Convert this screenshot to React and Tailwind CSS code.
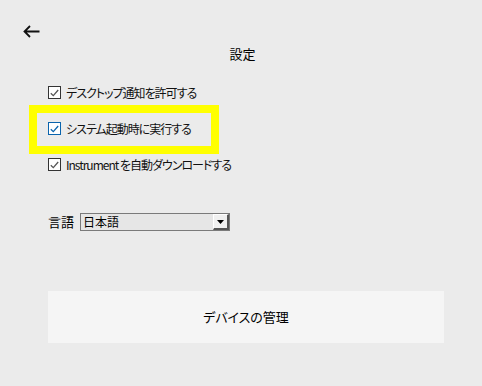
import { useState } from 'react';

const options = [
  { key: 'notify', label: 'デスクトップ通知を許可する' },
  { key: 'startup', label: 'システム起動時に実行する', focused: true },
  { key: 'download', label: 'Instrument を自動ダウンロードする' },
];

function CheckBox({ checked, focused }) {
  return (
    <span
      className={`flex h-[13px] w-[13px] shrink-0 items-center justify-center border bg-white ${
        focused ? 'border-[#0a64ad]' : 'border-[#333333]'
      }`}
    >
      {checked && (
        <svg width="9" height="8" viewBox="0 0 9 8">
          <path
            d="M0.8 4.2 L3.3 6.6 L8.2 1"
            fill="none"
            stroke={focused ? '#0a64ad' : '#555555'}
            strokeWidth="1.3"
          />
        </svg>
      )}
    </span>
  );
}

function OptionRow({ label, checked, focused, onToggle }) {
  return (
    <label className="flex h-[13px] cursor-default items-center gap-[5px]" onClick={onToggle}>
      <CheckBox checked={checked} focused={focused} />
      <span className="whitespace-nowrap text-[12px] leading-[13px] tracking-[-1px] text-[#111] [font-feature-settings:'palt']">
        {label}
      </span>
    </label>
  );
}

export default function App() {
  const [checked, setChecked] = useState({ notify: true, startup: true, download: true });

  const toggle = (key) => setChecked((c) => ({ ...c, [key]: !c[key] }));

  return (
    <div className="flex h-[386px] w-[482px] flex-col overflow-hidden bg-[#ebebeb] font-['Noto_Sans_CJK_JP','Noto_Sans',sans-serif] text-black">
      {/* 戻る */}
      <div className="ml-[23px] mt-[25px] h-[13px] w-[17px]">
        <svg width="17" height="13" viewBox="0 0 17 13">
          <path d="M16.5 6.5 H1.5 M7 1 L1.5 6.5 L7 12" fill="none" stroke="#111" strokeWidth="1.8" />
        </svg>
      </div>

      <h1 className="mt-[8px] pl-[3px] text-center text-[13px] leading-[16px] [font-feature-settings:'palt']">設定</h1>

      <div className="mt-[24px] flex flex-col">
        <div className="ml-[48px]">
          <OptionRow label={options[0].label} checked={checked.notify} onToggle={() => toggle('notify')} />
        </div>

        <div className="ml-[29px] mt-[6px] w-[190px] border-[8px] border-[#ffff00] pb-[11px] pl-[11px] pt-[9px]">
          <OptionRow label={options[1].label} checked={checked.startup} focused onToggle={() => toggle('startup')} />
        </div>

        <div className="ml-[48px] mt-[4px]">
          <OptionRow label={options[2].label} checked={checked.download} onToggle={() => toggle('download')} />
        </div>
      </div>

      {/* 言語 */}
      <div className="ml-[48px] mt-[42px] flex h-[18px] items-center gap-[6px]">
        <span className="text-[13px] leading-[18px]">言語</span>
        <div className="flex h-[18px] w-[150px] items-center border border-[#7a7a7a] bg-[#e6e6e6]">
          <span className="flex-1 pl-[2px] text-[12px] leading-[16px]">日本語</span>
          <span className="flex h-[16px] w-[16px] items-center justify-center border-b-2 border-r-2 border-l border-t border-b-[#555] border-l-white border-r-[#555] border-t-white bg-[#f0f0f0]">
            <svg width="7" height="4" viewBox="0 0 7 4">
              <path d="M0 0 H7 L3.5 4 Z" fill="#000" />
            </svg>
          </span>
        </div>
      </div>

      <button className="ml-[48px] mt-[60px] h-[52px] w-[396px] bg-[#f5f5f5] text-[13px] leading-[16px] [font-feature-settings:'palt']">
        デバイスの管理
      </button>
    </div>
  );
}
